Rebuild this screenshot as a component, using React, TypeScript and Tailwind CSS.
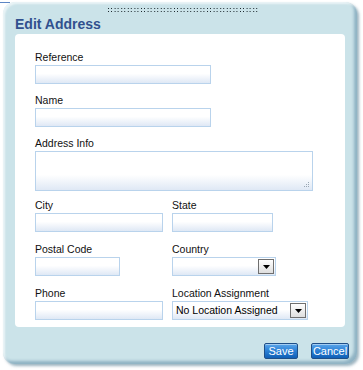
import React from "react";

const font = { fontFamily: '"Liberation Sans", Arial, sans-serif' };

function Grip() {
  // two rows of paired dots
  const dots: React.ReactNode[] = [];
  for (let g = 0; g < 23; g++) {
    for (let c = 0; c < 2; c++) {
      for (let r = 0; r < 2; r++) {
        dots.push(
          <rect key={`${g}-${c}-${r}`} x={g * 6.6 + c * 3} y={r * 3} width="1" height="1" fill="#1f2a30" />
        );
      }
    }
  }
  return (
    <svg width="152" height="5" viewBox="0 0 152 5" className="block">
      {dots}
    </svg>
  );
}

function Label({ children }: { children: React.ReactNode }) {
  return <div className="h-[13px] text-[10.5px] leading-[13px] text-[#111]">{children}</div>;
}

function TextBox({ w }: { w: string }) {
  return (
    <div
      className={`mt-px h-[19px] ${w} border border-[#b9d3ec] bg-gradient-to-b from-white from-45% to-[#dfe8f5]`}
    />
  );
}

function DropButton() {
  return (
    <div className="flex h-[15px] w-[16px] items-center justify-center border border-[#6f6f6f] bg-gradient-to-b from-white to-[#dedede]">
      <svg width="7" height="4" viewBox="0 0 7 4">
        <path d="M0 0h7L3.5 4z" fill="#000" />
      </svg>
    </div>
  );
}

function Select({ w, value }: { w: string; value?: string }) {
  return (
    <div
      className={`mt-px flex h-[19px] ${w} items-center justify-between border border-[#b9d3ec] bg-gradient-to-b from-white from-45% to-[#dfe8f5] pl-[3px] pr-px`}
    >
      <span className="text-[10.5px] leading-[13px] text-black">{value}</span>
      <DropButton />
    </div>
  );
}

function Btn({ children, w }: { children: React.ReactNode; w: string }) {
  return (
    <button
      className={`h-[16px] ${w} rounded-[2px] border border-[#1f4f88] bg-gradient-to-b from-[#5aa6ea] via-[#2a7fd4] to-[#0f5fb6] text-[11px] leading-[14px] text-white shadow-[inset_0_1px_0_rgba(255,255,255,0.45)]`}
      style={font}
    >
      {children}
    </button>
  );
}

export default function App() {
  return (
    <div className="relative h-[370px] w-[363px] bg-white pl-[3px] pt-[2px]" style={font}>
      <div className="absolute left-0 top-[2px] h-px w-[10px] bg-[#5d86c4]" />
      <div className="flex h-[362px] w-[354px] flex-col rounded-[12px] bg-[#cbe3e9] shadow-[inset_2px_2px_2px_rgba(255,255,255,0.6),inset_-3px_-3px_3px_rgba(70,120,150,0.45),2px_2px_3px_rgba(90,130,150,0.6)]">
        <div className="ml-[105px] mt-[6px]">
          <Grip />
        </div>
        <h1 className="ml-[12px] mt-[3px] h-[16px] text-[14px] font-bold leading-[16px] text-[#30508e]">
          Edit Address
        </h1>
        <div className="ml-[12px] mt-[2px] h-[293px] w-[330px] rounded-[4px] bg-white pl-[20px] pt-[17px]">
          <Label>Reference</Label>
          <TextBox w="w-[176px]" />

          <div className="mt-[10px]">
            <Label>Name</Label>
            <TextBox w="w-[176px]" />
          </div>

          <div className="mt-[10px]">
            <Label>Address Info</Label>
            <div className="relative mt-px h-[40px] w-[278px] border border-[#b9d3ec] bg-gradient-to-b from-white from-60% to-[#dfe8f5]">
              <svg width="7" height="7" viewBox="0 0 7 7" className="absolute bottom-[2px] right-[2px]">
                <rect x="5" y="1" width="1" height="1" fill="#9aa7b3" />
                <rect x="3" y="3" width="1" height="1" fill="#9aa7b3" />
                <rect x="5" y="3" width="1" height="1" fill="#9aa7b3" />
                <rect x="1" y="5" width="1" height="1" fill="#9aa7b3" />
                <rect x="3" y="5" width="1" height="1" fill="#9aa7b3" />
                <rect x="5" y="5" width="1" height="1" fill="#9aa7b3" />
              </svg>
            </div>
          </div>

          <div className="mt-[8px] flex">
            <div className="w-[137px]">
              <Label>City</Label>
              <TextBox w="w-[128px]" />
            </div>
            <div>
              <Label>State</Label>
              <TextBox w="w-[101px]" />
            </div>
          </div>

          <div className="mt-[11px] flex">
            <div className="w-[137px]">
              <Label>Postal Code</Label>
              <TextBox w="w-[85px]" />
            </div>
            <div>
              <Label>Country</Label>
              <Select w="w-[104px]" />
            </div>
          </div>

          <div className="mt-[11px] flex">
            <div className="w-[137px]">
              <Label>Phone</Label>
              <TextBox w="w-[128px]" />
            </div>
            <div>
              <Label>Location Assignment</Label>
              <Select w="w-[136px]" value="No Location Assigned" />
            </div>
          </div>
        </div>
        <div className="mt-[16px] flex justify-end gap-[13px] pr-[8px]">
          <Btn w="w-[34px]">Save</Btn>
          <Btn w="w-[38px]">Cancel</Btn>
        </div>
      </div>
    </div>
  );
}
